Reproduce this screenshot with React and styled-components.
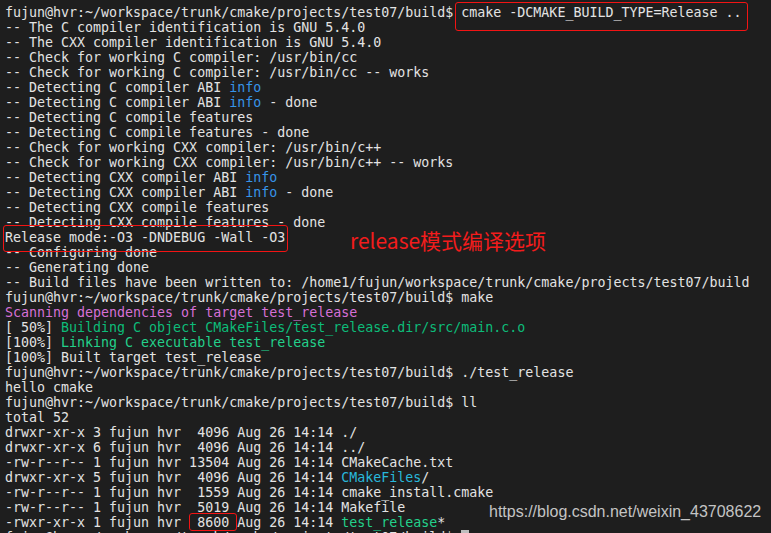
import React from "react";
import styled, { createGlobalStyle } from "styled-components";

const Global = createGlobalStyle`
  html, body {
    margin: 0;
    padding: 0;
    background: #1e1e1e;
  }
  #root {
    height: 533px;
    overflow: hidden;
  }
`;

const Terminal = styled.div`
  position: relative;
  width: 771px;
  height: 533px;
  overflow: hidden;
  background: #1e1e1e;
  padding: 5px 0 0 5px;
  box-sizing: border-box;
  font-family: "DejaVu Sans Mono", "Liberation Mono", monospace;
  font-size: 13.3px;
  color: #e3e3e3;
`;

const Line = styled.div`
  height: 15px;
  line-height: 15px;
  white-space: pre;
`;

const colors = {
  blue: "#3794e8",
  magenta: "#d670d6",
  green: "#0dbc79",
  bgreen: "#23d18b",
  cyan: "#29b8db",
};

const Tint = styled.span`
  color: ${(p) => colors[p.$c]};
`;

const Cursor = styled.span`
  display: inline-block;
  width: 8px;
  height: 15px;
  vertical-align: top;
  background: #bdbdbd;
`;

const Mark = styled.div`
  position: absolute;
  border: 1.5px solid #f21414;
  border-radius: 3px;
  box-sizing: border-box;
`;

const Note = styled.div`
  position: absolute;
  left: 350px;
  top: 226px;
  font-family: "Noto Sans CJK SC", "Noto Sans", sans-serif;
  font-size: 21px;
  line-height: 28px;
  color: #f21c1c;
  white-space: nowrap;
`;

const Watermark = styled.div`
  position: absolute;
  left: 489px;
  top: 503px;
  font-family: "Liberation Sans", Arial, sans-serif;
  font-size: 16px;
  color: #c4c4c4;
  white-space: nowrap;
`;

const P = "fujun@hvr:~/workspace/trunk/cmake/projects/test07/build$ ";

const App = () => {
  return (
    <Terminal>
      <Global />
      <Line>{P}cmake -DCMAKE_BUILD_TYPE=Release ..</Line>
      <Line>-- The C compiler identification is GNU 5.4.0</Line>
      <Line>-- The CXX compiler identification is GNU 5.4.0</Line>
      <Line>-- Check for working C compiler: /usr/bin/cc</Line>
      <Line>-- Check for working C compiler: /usr/bin/cc -- works</Line>
      <Line>-- Detecting C compiler ABI <Tint $c="blue">info</Tint></Line>
      <Line>-- Detecting C compiler ABI <Tint $c="blue">info</Tint> - done</Line>
      <Line>-- Detecting C compile features</Line>
      <Line>-- Detecting C compile features - done</Line>
      <Line>-- Check for working CXX compiler: /usr/bin/c++</Line>
      <Line>-- Check for working CXX compiler: /usr/bin/c++ -- works</Line>
      <Line>-- Detecting CXX compiler ABI <Tint $c="blue">info</Tint></Line>
      <Line>-- Detecting CXX compiler ABI <Tint $c="blue">info</Tint> - done</Line>
      <Line>-- Detecting CXX compile features</Line>
      <Line>-- Detecting CXX compile features - done</Line>
      <Line>Release mode:-O3 -DNDEBUG -Wall -O3</Line>
      <Line>-- Configuring done</Line>
      <Line>-- Generating done</Line>
      <Line>-- Build files have been written to: /home1/fujun/workspace/trunk/cmake/projects/test07/build</Line>
      <Line>{P}make</Line>
      <Line><Tint $c="magenta">Scanning dependencies of target test_release</Tint></Line>
      <Line>[ 50%] <Tint $c="green">Building C object CMakeFiles/test_release.dir/src/main.c.o</Tint></Line>
      <Line>[100%] <Tint $c="bgreen">Linking C executable test_release</Tint></Line>
      <Line>[100%] Built target test_release</Line>
      <Line>{P}./test_release</Line>
      <Line>hello cmake</Line>
      <Line>{P}ll</Line>
      <Line>total 52</Line>
      <Line>drwxr-xr-x 3 fujun hvr  4096 Aug 26 14:14 ./</Line>
      <Line>drwxr-xr-x 6 fujun hvr  4096 Aug 26 14:14 ../</Line>
      <Line>-rw-r--r-- 1 fujun hvr 13504 Aug 26 14:14 CMakeCache.txt</Line>
      <Line>drwxr-xr-x 5 fujun hvr  4096 Aug 26 14:14 <Tint $c="cyan">CMakeFiles</Tint>/</Line>
      <Line>-rw-r--r-- 1 fujun hvr  1559 Aug 26 14:14 cmake_install.cmake</Line>
      <Line>-rw-r--r-- 1 fujun hvr  5019 Aug 26 14:14 Makefile</Line>
      <Line>-rwxr-xr-x 1 fujun hvr  8600 Aug 26 14:14 <Tint $c="bgreen">test_release</Tint>*</Line>
      <Line>{P}<Cursor /></Line>

      <Mark style={{ left: 455, top: 2, width: 293, height: 29 }} />
      <Mark style={{ left: 3, top: 225, width: 285, height: 27 }} />
      <Mark style={{ left: 189, top: 513, width: 48, height: 18 }} />
      <Note>release模式编译选项</Note>
      <Watermark>https://blog.csdn.net/weixin_43708622</Watermark>
    </Terminal>
  );
};

export default App;
